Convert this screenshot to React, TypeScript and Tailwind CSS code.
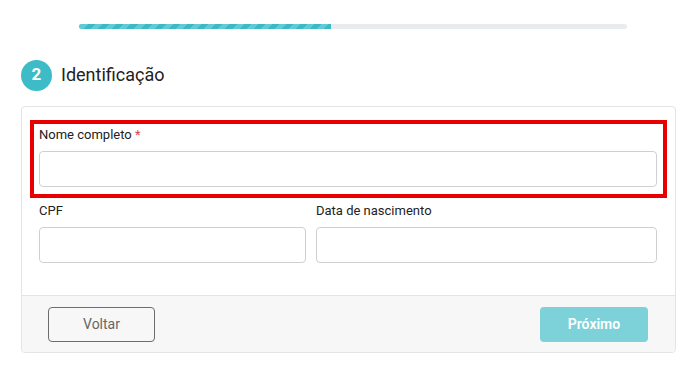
export default function App() {
  return (
    <div className="w-[695px] h-[390px] bg-white font-['Roboto',sans-serif] text-[#222]">
      {/* Progress */}
      <div className="pt-[24px] pl-[79px]">
        <div className="w-[548px] h-[5px] bg-[#e9ecef] rounded-full overflow-hidden">
          <div className="h-full w-[252px] bg-[repeating-linear-gradient(-45deg,#3bb9c4_0,#3bb9c4_5px,#63c9d2_5px,#63c9d2_10px)]" />
        </div>
      </div>

      {/* Step heading */}
      <div className="mt-[31px] ml-[21px] flex items-center gap-[9px] h-[30px]">
        <div className="w-[31px] h-[31px] rounded-full bg-[#3dbcc7] flex items-center justify-center text-white text-[17px] font-bold">
          2
        </div>
        <h2 className="text-[18px] leading-none text-[#222]">Identificação</h2>
      </div>

      {/* Card */}
      <div className="mt-[16px] ml-[21px] w-[655px] border border-[#e4e4e4] rounded-[4px] overflow-hidden">
        <div className="pt-[19px] pl-[17px] pr-[18px] pb-[32px]">
          <div className="relative">
            <label className="block text-[13px] leading-[18px] mb-[7px]">
              Nome completo <span className="text-[#e4414b]">*</span>
            </label>
            <input className="block w-full h-[36px] border border-[#cfcfcf] rounded-[4px] px-3 text-sm outline-none" />
            <div className="absolute -top-[6px] -left-[9px] -right-[10px] -bottom-[11px] border-4 border-[#e80000] pointer-events-none" />
          </div>

          <div className="mt-[15px] grid grid-cols-[267px_1fr] gap-x-[10px]">
            <div>
              <label className="block text-[13px] leading-[18px] mb-[7px]">CPF</label>
              <input className="block w-full h-[36px] border border-[#cfcfcf] rounded-[4px] px-3 text-sm outline-none" />
            </div>
            <div>
              <label className="block text-[13px] leading-[18px] mb-[7px]">Data de nascimento</label>
              <input className="block w-full h-[36px] border border-[#cfcfcf] rounded-[4px] px-3 text-sm outline-none" />
            </div>
          </div>
        </div>

        <div className="border-t border-[#e4e4e4] bg-[#f7f7f7] pt-[11px] pb-[10px] pl-[26px] pr-[27px] flex justify-between">
          <button className="w-[107px] h-[35px] border border-[#6c6c6c] rounded-[4px] text-[14px] text-[#666]">
            Voltar
          </button>
          <button className="w-[108px] h-[35px] rounded-[4px] bg-[#7dd1d9] text-white text-[14px] font-semibold">
            Próximo
          </button>
        </div>
      </div>
    </div>
  )
}
